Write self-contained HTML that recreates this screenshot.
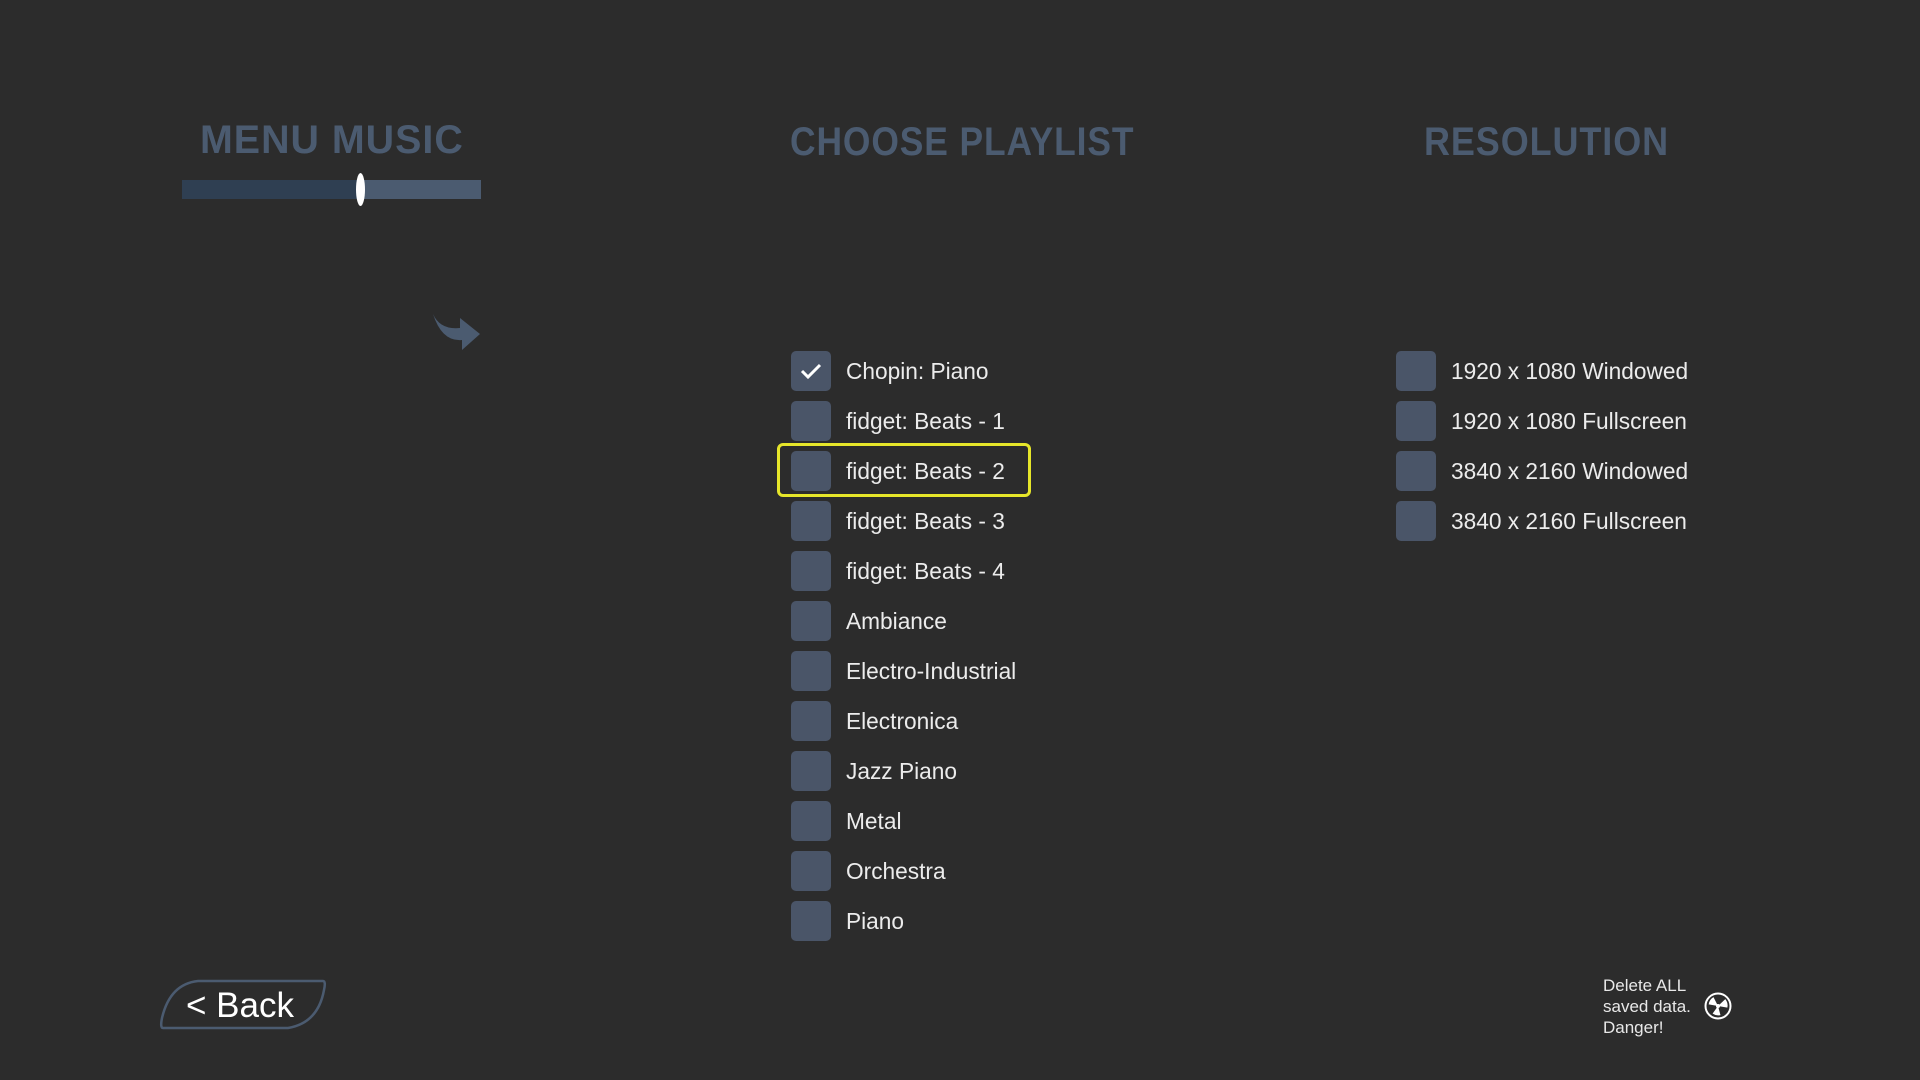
<!DOCTYPE html>
<html><head><meta charset="utf-8"><style>
html,body{margin:0;padding:0;background:#2c2c2c;width:1920px;height:1080px;overflow:hidden;position:relative;font-family:"Liberation Sans",sans-serif}
.t{position:absolute;color:#4b5b70;font-weight:bold;font-size:40px;letter-spacing:1px;white-space:nowrap;transform-origin:0 0}
.cb{position:absolute;width:40px;height:40px;background:#4a5568;border-radius:5px}
.lb{position:absolute;color:#ececec;font-size:22.7px;white-space:nowrap;line-height:40px}
</style></head><body>
<div class="t" style="left:200px;top:118px;transform:scaleX(0.985)">MENU MUSIC</div>
<div class="t" style="left:790px;top:120px;transform:scaleX(0.885)">CHOOSE PLAYLIST</div>
<div class="t" style="left:1424px;top:120px;transform:scaleX(0.9)">RESOLUTION</div>
<div style="position:absolute;left:182px;top:180px;width:178px;height:19px;background:#2f3f52"></div>
<div style="position:absolute;left:360px;top:180px;width:121px;height:19px;background:#4b5b70"></div>
<div style="position:absolute;left:356px;top:173px;width:9px;height:33px;background:#fff;border-radius:50%"></div>
<svg style="position:absolute;left:430px;top:310px" width="52" height="42" viewBox="0 0 52 42"><path d="M3 4 Q10 20 30 18 L30 8 L50 24 L32 40 L32 30 Q12 32 3 4Z" fill="#4b5b70"/></svg>
<div class="cb" style="left:791px;top:351px"></div>
<svg style="position:absolute;left:799px;top:361px" width="24" height="20"><path d="M3 10 L9 16 L21 4" stroke="#fff" stroke-width="3" fill="none"/></svg>
<div class="lb" style="left:846px;top:351px">Chopin: Piano</div>
<div class="cb" style="left:791px;top:401px"></div><div class="lb" style="left:846px;top:401px">fidget: Beats - 1</div>
<div class="cb" style="left:791px;top:451px"></div><div class="lb" style="left:846px;top:451px">fidget: Beats - 2</div>
<div class="cb" style="left:791px;top:501px"></div><div class="lb" style="left:846px;top:501px">fidget: Beats - 3</div>
<div class="cb" style="left:791px;top:551px"></div><div class="lb" style="left:846px;top:551px">fidget: Beats - 4</div>
<div class="cb" style="left:791px;top:601px"></div><div class="lb" style="left:846px;top:601px">Ambiance</div>
<div class="cb" style="left:791px;top:651px"></div><div class="lb" style="left:846px;top:651px">Electro-Industrial</div>
<div class="cb" style="left:791px;top:701px"></div><div class="lb" style="left:846px;top:701px">Electronica</div>
<div class="cb" style="left:791px;top:751px"></div><div class="lb" style="left:846px;top:751px">Jazz Piano</div>
<div class="cb" style="left:791px;top:801px"></div><div class="lb" style="left:846px;top:801px">Metal</div>
<div class="cb" style="left:791px;top:851px"></div><div class="lb" style="left:846px;top:851px">Orchestra</div>
<div class="cb" style="left:791px;top:901px"></div><div class="lb" style="left:846px;top:901px">Piano</div>
<div style="position:absolute;left:777px;top:443px;width:248px;height:48px;border:3px solid #e6e62a;border-radius:6px"></div>
<div class="cb" style="left:1396px;top:351px"></div><div class="lb" style="left:1451px;top:351px">1920 x 1080 Windowed</div>
<div class="cb" style="left:1396px;top:401px"></div><div class="lb" style="left:1451px;top:401px">1920 x 1080 Fullscreen</div>
<div class="cb" style="left:1396px;top:451px"></div><div class="lb" style="left:1451px;top:451px">3840 x 2160 Windowed</div>
<div class="cb" style="left:1396px;top:501px"></div><div class="lb" style="left:1451px;top:501px">3840 x 2160 Fullscreen</div>
<svg style="position:absolute;left:158px;top:978px" width="170" height="54"><path d="M40 3 L165 3 Q168 3 166 12 Q160 45 130 50 L5 50 Q2 50 4 40 Q12 6 40 3Z" fill="none" stroke="#4b5b70" stroke-width="2.5"/></svg>
<div style="position:absolute;left:186px;top:984px;color:#fff;font-size:35px;line-height:44px">&lt; Back</div>
<div style="position:absolute;left:1603px;top:975px;color:#e8e8e8;font-size:17px;line-height:21px">Delete ALL<br>saved data.<br>Danger!</div>
<svg style="position:absolute;left:1704px;top:992px" width="28" height="28" viewBox="0 0 28 28"><circle cx="14" cy="14" r="12.5" fill="none" stroke="#fff" stroke-width="2"/><circle cx="14" cy="14" r="2" fill="#fff"/><path d="M14 14 L8 6 A10 10 0 0 0 4.5 14Z M14 14 L20 6 A10 10 0 0 1 23.5 14Z M14 14 L18 22.5 A10 10 0 0 1 10 22.5Z" fill="#fff" transform="rotate(10 14 14)"/></svg>
</body></html>
